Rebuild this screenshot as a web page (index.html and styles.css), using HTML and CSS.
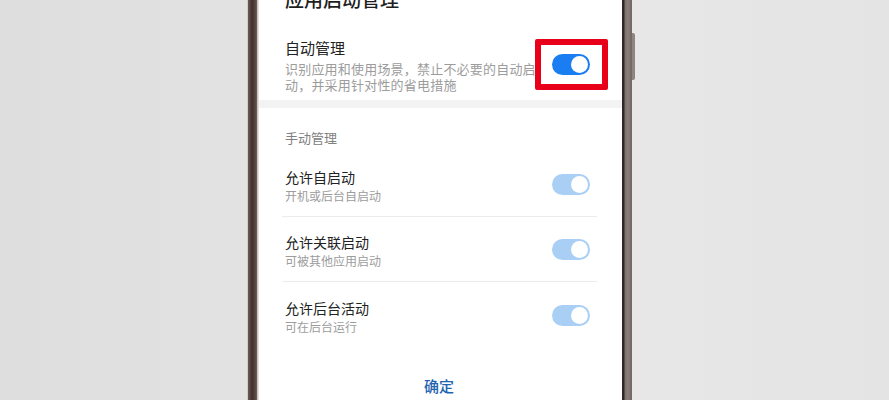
FILE: index.html
```html
<!DOCTYPE html>
<html lang="zh-CN">
<head>
<meta charset="utf-8">
<title>应用启动管理</title>
<link rel="stylesheet" href="styles.css">
</head>
<body>
<div class="stage">
  <div class="bezel-left"></div>
  <div class="screen">
    <h1 class="dialog-title">应用启动管理</h1>
    <div class="auto-row">
      <div class="text">
        <div class="auto-title">自动管理</div>
        <div class="auto-sub">识别应用和使用场景，禁止不必要的自动启动，并采用针对性的省电措施</div>
      </div>
      <div class="switch on"><span class="knob"></span><span class="mark-box"></span></div>
    </div>
    <div class="band"></div>
    <div class="section-label">手动管理</div>
    <div class="list">
      <div class="item">
        <div class="text">
          <div class="item-title">允许自启动</div>
          <div class="item-sub">开机或后台自启动</div>
        </div>
        <div class="switch dim"><span class="knob"></span></div>
      </div>
      <div class="item">
        <div class="text">
          <div class="item-title">允许关联启动</div>
          <div class="item-sub">可被其他应用启动</div>
        </div>
        <div class="switch dim"><span class="knob"></span></div>
      </div>
      <div class="item last">
        <div class="text">
          <div class="item-title">允许后台活动</div>
          <div class="item-sub">可在后台运行</div>
        </div>
        <div class="switch dim"><span class="knob"></span></div>
      </div>
    </div>
    <div class="confirm">确定</div>
  </div>
  <div class="bezel-right"><span class="side-button"></span></div>
</div>
</body>
</html>
```
FILE: styles.css
```css
* { box-sizing: border-box; }
html, body { margin: 0; padding: 0; }
body {
  background: #e3e3e3;
  font-family: "Noto Sans CJK SC", "Noto Sans", sans-serif;
}
.stage {
  display: flex;
  height: 400px;
  overflow: hidden;
  padding-left: 247px;
  background: linear-gradient(to right, #dedede 0, #e2e2e2 247px, #e7e7e7 632px, #e4e4e4 100%);
}
.bezel-left {
  width: 12px;
  flex: none;
  background: linear-gradient(to right, #d3ccc9 0, #d3ccc9 1px, #6b5b55 1px, #3f312d 5px, #554540 8px, #6f605a 10px, #c8c1be 10.5px, #eeeceb 12px);
}
.screen {
  width: 363px;
  flex: none;
  background: #ffffff;
  overflow: hidden;
  display: flex;
  flex-direction: column;
}
.bezel-right {
  width: 10px;
  flex: none;
  position: relative;
  background: linear-gradient(to right, #2f2a29 0, #2f2a29 2px, #7c706c 3px, #8a7f7b 6px, #71655f 10px);
}
.side-button {
  position: absolute;
  left: 10px;
  top: 33px;
  width: 3px;
  height: 47px;
  border-radius: 0 2px 2px 0;
  background: #8e8481;
}
.dialog-title {
  margin: -13px 0 0 26px;
  font-size: 19px;
  line-height: 24px;
  font-weight: 500;
  color: #1e1e1e;
}
.auto-row {
  display: flex;
  align-items: center;
  gap: 14px;
  margin-top: 27px;
  padding: 0 32.5px 0 26px;
}
.text { flex: 1; min-width: 0; }
.auto-title {
  font-size: 15px;
  line-height: 20px;
  color: #222222;
}
.auto-sub {
  margin-top: 3px;
  font-size: 13px;
  line-height: 16px;
  letter-spacing: 0.2px;
  text-spacing-trim: space-all;
  color: #9c9c9c;
}
.band {
  margin-top: 7px;
  height: 8px;
  background: #f3f3f3;
}
.section-label {
  margin: 20.5px 0 4.5px 26px;
  font-size: 13px;
  line-height: 18px;
  color: #808080;
}
.list {
  margin: 0 25px 0 23px;
}
.item {
  display: flex;
  align-items: center;
  gap: 14px;
  padding: 15.5px 7.5px 12px 3px;
  border-bottom: 1px solid #ececec;
}
.item.last { border-bottom: none; }
.item-title {
  font-size: 14px;
  line-height: 20px;
  color: #222222;
}
.item-sub {
  font-size: 12px;
  line-height: 17px;
  color: #9c9c9c;
}
.switch {
  position: relative;
  flex: none;
  width: 38px;
  height: 21px;
  border-radius: 11px;
  margin-top: -2px;
}
.switch.on { background: #1a7df1; }
.switch.dim { background: #a9cff5; }
.knob {
  position: absolute;
  right: 2px;
  top: 2px;
  width: 17px;
  height: 17px;
  border-radius: 50%;
  background: #ffffff;
}
.mark-box {
  position: absolute;
  left: -17px;
  top: -15px;
  width: 73px;
  height: 51px;
  border: 6px solid #e8001a;
  border-radius: 2px;
}
.confirm {
  margin-top: 29.5px;
  text-align: center;
  font-size: 15px;
  line-height: 20px;
  font-weight: 500;
  color: #2463b0;
  padding-right: 3px;
}
```
